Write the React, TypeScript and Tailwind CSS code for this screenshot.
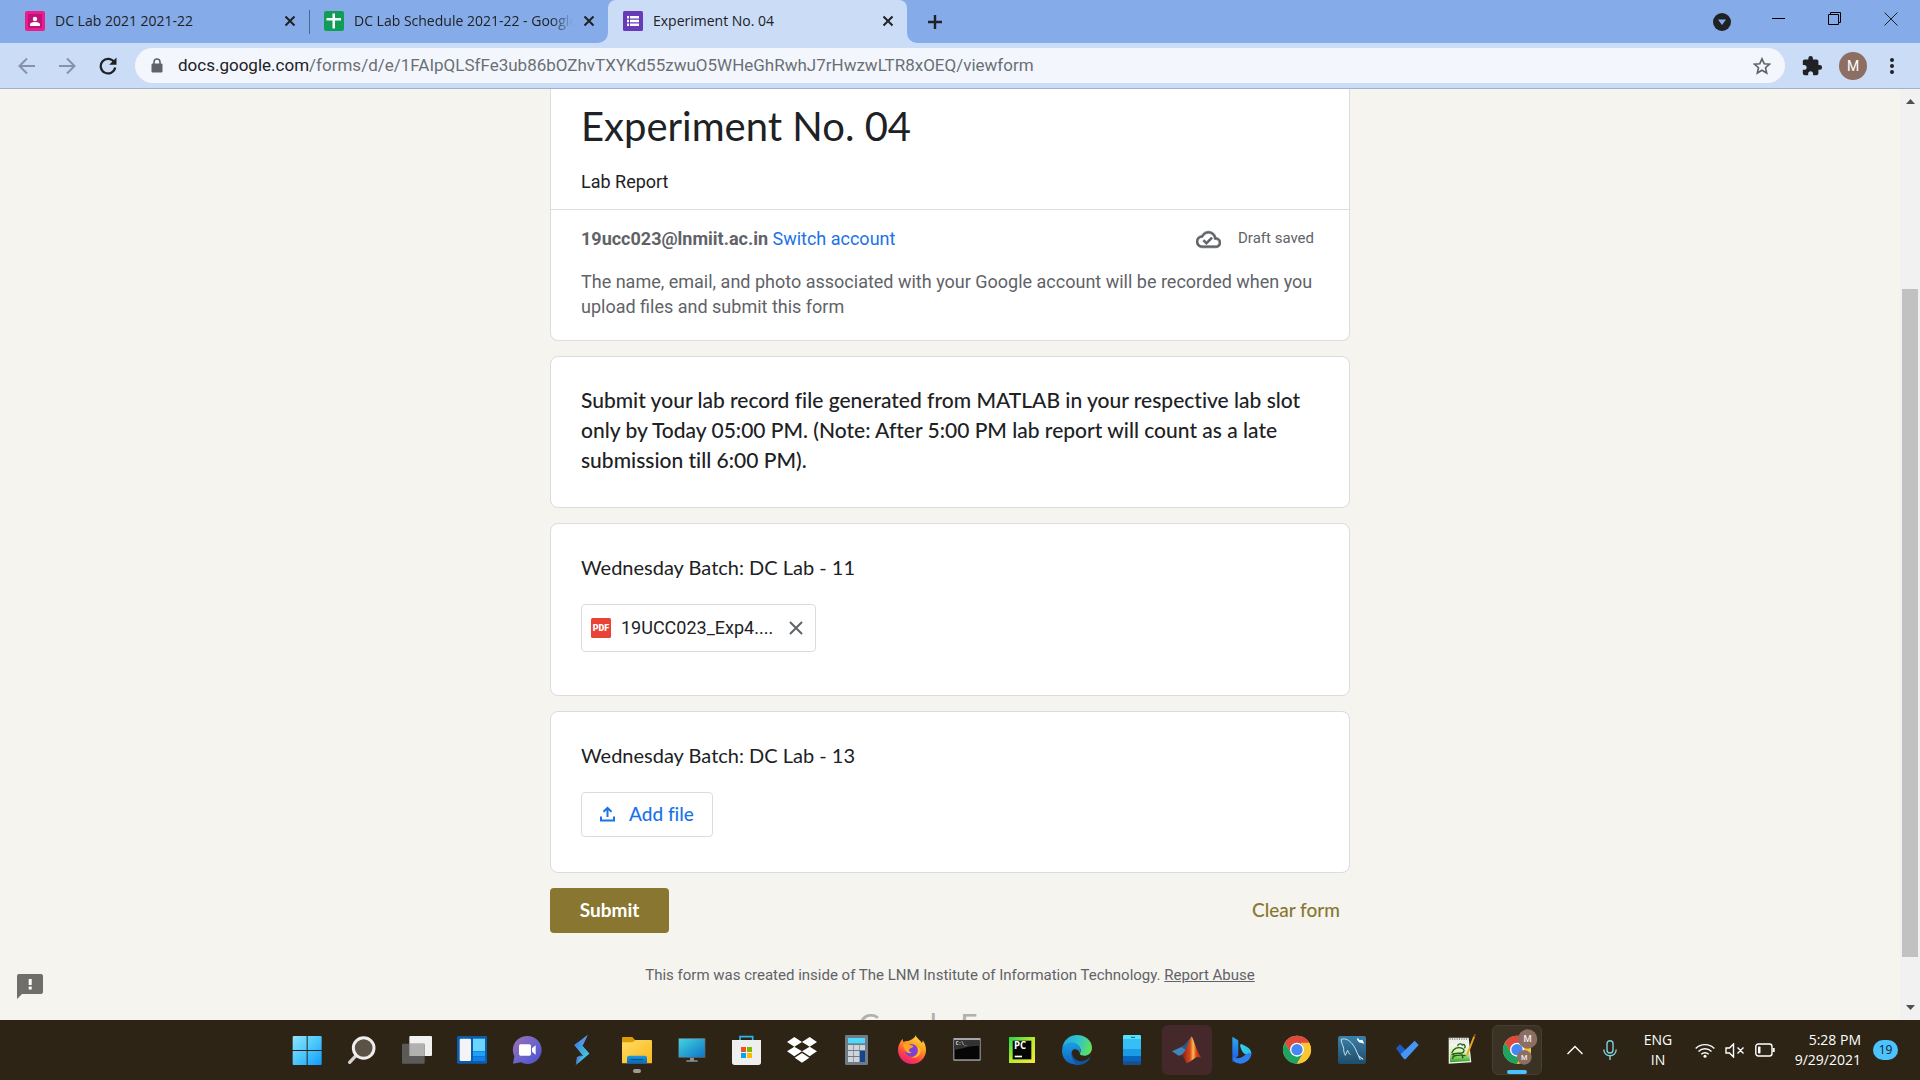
import React from "react";

/* ---------- Browser chrome ---------- */

function CloseGlyph() {
  return (
    <svg viewBox="0 0 12 12" className="size-3" fill="none" stroke="#202124" strokeWidth="2">
      <path d="M1.5 1.5l9 9M10.5 1.5l-9 9" />
    </svg>
  );
}

function ClassroomIcon() {
  return (
    <svg viewBox="0 0 20 20" className="size-5">
      <rect width="20" height="20" rx="2" fill="#e91e8c" />
      <rect x="3" y="3" width="14" height="14" fill="#c2127a" />
      <circle cx="10" cy="8" r="2.2" fill="#fff" />
      <path d="M5 15v-1.5c0-1.8 3-2.5 5-2.5s5 .7 5 2.500V15z" fill="#fff" />
    </svg>
  );
}

function SheetsIcon() {
  return (
    <svg viewBox="0 0 20 20" className="size-5">
      <rect width="20" height="20" rx="2" fill="#0f9d58" />
      <path d="M8.500 2.500h2.500v4.500h6v2.500h-6v8H8.500v-8h-6V7h6z" fill="#fff" />
    </svg>
  );
}

function FormsIcon() {
  return (
    <svg viewBox="0 0 20 20" className="size-5">
      <rect width="20" height="20" rx="1.500" fill="#673ab7" />
      <path
        d="M4 5h2v2.500H4zM7 5h9v2.500H7zM4 8.800h2v2.500H4zM7 8.800h9v2.500H7zM4 12.600h2v2.500H4zM7 12.600h9v2.500H7z"
        fill="#fff"
      />
    </svg>
  );
}

type TabProps = { icon: React.ReactNode; title: string; active?: boolean; divider?: boolean };

function Tab({ icon, title, active, divider }: TabProps) {
  return (
    <div
      className={
        active
          ? "relative flex h-full w-[299px] items-center gap-2.5 rounded-t-lg bg-[#cbdcf7] pr-[13px] pb-0.5 pl-[15px]"
          : "relative flex h-full w-[299px] items-center gap-2.5 pr-[13px] pb-0.5 pl-[15px]"
      }
    >
      {icon}
      <span
        className={
          divider === false
            ? "min-w-0 flex-1 overflow-hidden whitespace-nowrap [mask-image:linear-gradient(to_right,black_90%,transparent)]"
            : "min-w-0 flex-1 overflow-hidden whitespace-nowrap"
        }
      >
        {title}
      </span>
      <button type="button" aria-label={"Close " + title} className="flex size-3 items-center justify-center">
        <CloseGlyph />
      </button>
      {divider && <span className="absolute top-2.5 -right-px h-6 w-px bg-[#4d668f]" />}
      {active && (
        <>
          <svg viewBox="0 0 10 10" className="absolute bottom-0 -left-2.5 size-2.5">
            <path d="M10 0v10H0A10 10 0 0 0 10 0z" fill="#cbdcf7" />
          </svg>
          <svg viewBox="0 0 10 10" className="absolute -right-2.5 bottom-0 size-2.5">
            <path d="M0 0v10h10A10 10 0 0 1 0 0z" fill="#cbdcf7" />
          </svg>
        </>
      )}
    </div>
  );
}

function TabStrip() {
  return (
    <div className="flex h-[43px] shrink-0 items-center bg-[#85ace9] pl-2.5 font-['Open_Sans',sans-serif] text-sm text-[#202124]">
      <Tab icon={<ClassroomIcon />} title="DC Lab 2021 2021-22" divider />
      <Tab icon={<SheetsIcon />} title="DC Lab Schedule 2021-22 - Google Sheets" divider={false} />
      <Tab icon={<FormsIcon />} title="Experiment No. 04" active />
      <button type="button" aria-label="New tab" className="ml-5 flex size-4 items-center justify-center">
        <svg viewBox="0 0 16 16" className="size-4" stroke="#202124" strokeWidth="2.400">
          <path d="M8 1v14M1 8h14" />
        </svg>
      </button>
      <button type="button" aria-label="Search tabs" className="ml-auto flex w-[57px] justify-center">
        <svg viewBox="0 0 18 18" className="size-[18px]">
          <circle cx="9" cy="9" r="9" fill="#202124" />
          <path d="M5 6.500h8L9 12z" fill="#85ace9" />
        </svg>
      </button>
      <div className="flex items-center self-start">
        <button type="button" aria-label="Minimize" className="flex h-[37px] w-14 items-center justify-center">
          <span className="h-px w-[13px] bg-black" />
        </button>
        <button type="button" aria-label="Restore" className="flex h-[37px] w-14 items-center justify-center">
          <svg viewBox="0 0 13 13" className="size-[13px]" fill="none" stroke="#000">
            <path d="M.5 2.500h10v10H.500zM2.500 2.500v-2h10v10h-2" />
          </svg>
        </button>
        <button type="button" aria-label="Close window" className="flex h-[37px] w-[58px] items-center justify-center">
          <svg viewBox="0 0 14 14" className="size-3.5" fill="none" stroke="#222">
            <path d="M.5.5l13 13M13.500.5l-13 13" />
          </svg>
        </button>
      </div>
    </div>
  );
}

function Toolbar() {
  return (
    <div className="flex h-[46px] shrink-0 items-center border-b border-[#a3b0c9] bg-[#cbdcf7] pl-[7px]">
      <button type="button" aria-label="Back" className="flex w-10 justify-center">
        <svg viewBox="0 0 18 18" className="size-[18px]" fill="none" stroke="#8592a9" strokeWidth="2">
          <path d="M17 9H2M9 1.500L1.500 9 9 16.500" />
        </svg>
      </button>
      <button type="button" aria-label="Forward" className="flex w-10 justify-center">
        <svg viewBox="0 0 18 18" className="size-[18px]" fill="none" stroke="#8592a9" strokeWidth="2">
          <path d="M1 9h15M9 1.500L16.500 9 9 16.500" />
        </svg>
      </button>
      <button type="button" aria-label="Reload" className="mr-1.5 flex w-[42px] justify-center">
        <svg viewBox="0 0 18 18" className="size-[18px]">
          <path d="M15.200 5.200A7.300 7.300 0 1 0 16.200 10.500" fill="none" stroke="#202124" strokeWidth="2.200" />
          <path d="M17.500.5v7.300h-7.300z" fill="#202124" />
        </svg>
      </button>
      <div className="flex h-[35px] flex-1 items-center rounded-full bg-[#f3f7fd] pr-3.5 pl-4">
        <svg viewBox="0 0 12 15" className="mr-[15px] h-[15px] w-3">
          <rect x=".5" y="5.500" width="11" height="9" rx="1.200" fill="#5f6368" />
          <path d="M3 6V4a3 3 0 0 1 6 0v2" fill="none" stroke="#5f6368" strokeWidth="1.600" />
        </svg>
        <a href="#form" className="flex-1 font-['Roboto',sans-serif] text-[17px] text-[#6b6f75]">
          <span className="text-[#202124]">docs.google.com</span>
          /forms/d/e/1FAIpQLSfFe3ub86bOZhvTXYKd55zwuO5WHeGhRwhJ7rHwzwLTR8xOEQ/viewform
        </a>
        <button type="button" aria-label="Bookmark this tab">
          <svg viewBox="0 0 18 18" className="size-[18px]" fill="none" stroke="#5f6368" strokeWidth="1.600">
            <path d="M9 1.800l2.200 4.900 5.300.5-4 3.500 1.200 5.300L9 13.200 4.300 16l1.200-5.300-4-3.500 5.300-.5z" />
          </svg>
        </button>
      </div>
      <button type="button" aria-label="Extensions" className="ml-4">
        <svg viewBox="0 0 24 24" className="size-[22px]" fill="#202124">
          <path d="M20.500 11H19V7c0-1.100-.9-2-2-2h-4V3.500a2.500 2.500 0 0 0-5 0V5H4c-1.100 0-2 .9-2 2v3.800h1.500c1.500 0 2.700 1.200 2.700 2.700s-1.200 2.700-2.700 2.700H2V20c0 1.100.9 2 2 2h3.800v-1.500c0-1.500 1.200-2.700 2.700-2.700s2.700 1.200 2.700 2.700V22H17c1.100 0 2-.9 2-2v-4h1.500a2.500 2.500 0 0 0 0-5z" />
        </svg>
      </button>
      <button
        type="button"
        aria-label="Profile"
        className="ml-4 flex size-7 items-center justify-center rounded-full bg-[#8d6e63] font-['Roboto',sans-serif] text-sm text-white"
      >
        M
      </button>
      <button type="button" aria-label="Menu" className="mr-[21px] ml-[18px] flex w-[14px] justify-center">
        <svg viewBox="0 0 4 16" className="h-4 w-1" fill="#202124">
          <circle cx="2" cy="2" r="2" />
          <circle cx="2" cy="8" r="2" />
          <circle cx="2" cy="14" r="2" />
        </svg>
      </button>
    </div>
  );
}

/* ---------- Form ---------- */

function Card({ children, className }: { children: React.ReactNode; className: string }) {
  return <section className={"rounded-lg border border-[#dadce0] bg-white " + className}>{children}</section>;
}

function HeaderCard() {
  return (
    <section className="rounded-b-lg border border-t-0 border-[#dadce0] bg-white">
      <div className="border-b border-[#dadce0] px-[30px] pt-[13px] pb-[15px]">
        <h1 className="font-['Lato',sans-serif] text-[40px] leading-[48px]">Experiment No. 04</h1>
        <p className="mt-5 text-lg leading-6">Lab Report</p>
      </div>
      <div className="px-[30px] pt-[17px] pb-[21px] text-lg leading-6 text-[#5f6368]">
        <div className="flex items-center justify-between">
          <p>
            <b className="font-bold">19ucc023@lnmiit.ac.in</b>{" "}
            <a href="#switch" className="text-[#1a73e8]">
              Switch account
            </a>
          </p>
          <div className="flex h-6 items-center gap-[17px]">
            <svg viewBox="0 0 24 24" className="size-[25px]" fill="#5f6368" stroke="#5f6368" strokeWidth=".6">
              <path d="M19.350 10.040A7.490 7.490 0 0 0 12 4C9.110 4 6.600 5.640 5.350 8.040A5.994 5.994 0 0 0 0 14c0 3.310 2.690 6 6 6h13c2.760 0 5-2.240 5-5 0-2.640-2.050-4.780-4.650-4.960zM19 18H6c-2.210 0-4-1.790-4-4 0-2.050 1.530-3.760 3.560-3.970l1.070-.11.500-.95A5.469 5.469 0 0 1 12 6c2.620 0 4.880 1.860 5.390 4.430l.3 1.500 1.530.11A2.980 2.980 0 0 1 22 15c0 1.650-1.350 3-3 3zm-9-3.820l-2.090-2.090L6.500 13.500 10 17l6.010-6.010-1.410-1.410z" />
            </svg>
            <span className="w-[81px] pb-0.5 text-[15px] leading-5 whitespace-nowrap">Draft saved</span>
          </div>
        </div>
        <p className="mt-[18px] leading-[25px]">
          The name, email, and photo associated with your Google account will be recorded when you upload files and
          submit this form
        </p>
      </div>
    </section>
  );
}

function FileChip() {
  return (
    <div className="mt-[22px] flex h-12 w-[235px] items-center rounded border border-[#dadce0] pr-3 pl-[9px]">
      <svg viewBox="0 0 20 20" className="mr-2.5 size-5">
        <rect width="20" height="20" rx="1.500" fill="#ea4335" />
        <text x="10" y="13" textAnchor="middle" fontFamily="Roboto" fontWeight="900" fontSize="9" fill="#fff">
          PDF
        </text>
      </svg>
      <span className="w-[154px] text-lg leading-6">19UCC023_Exp4....</span>
      <button type="button" aria-label="Remove file" className="ml-auto">
        <svg viewBox="0 0 14 14" className="size-3.5" fill="none" stroke="#5f6368" strokeWidth="2">
          <path d="M1 1l12 12M13 1L1 13" />
        </svg>
      </button>
    </div>
  );
}

function Form() {
  return (
    <form id="form" className="mx-auto flex w-full max-w-[800px] flex-col gap-[15px]">
      <HeaderCard />
      <Card className="px-[30px] pt-7 pb-8">
        <h2 className="font-['Lato',sans-serif] text-[21px] leading-[30px] font-medium [font-variant-ligatures:none]">
          Submit your lab record file generated from MATLAB in your respective lab slot only by Today 05:00 PM. (Note:
          After 5:00 PM lab report will count as a late submission till 6:00 PM).
        </h2>
      </Card>
      <Card className="px-[30px] pt-7 pb-[43px]">
        <h2 className="font-['Lato',sans-serif] text-xl leading-[30px]">Wednesday Batch: DC Lab - 11</h2>
        <FileChip />
      </Card>
      <Card className="px-[30px] pt-7 pb-[35px]">
        <h2 className="font-['Lato',sans-serif] text-xl leading-[30px]">Wednesday Batch: DC Lab - 13</h2>
        <button
          type="button"
          className="mt-[22px] flex h-[45px] w-[132px] items-center gap-3.5 rounded border border-[#dadce0] pb-0.5 pl-[18px] font-['Lato',sans-serif] text-[19px] leading-6 font-medium text-[#1a73e8] [font-variant-ligatures:none]"
        >
          <svg viewBox="0 0 15 16" className="h-4 w-[15px]" fill="none" stroke="#1a73e8" strokeWidth="2">
            <path d="M7.500 11V2M3.500 5.800l4-4 4 4M1 10.500V14.500h13V10.500" />
          </svg>
          Add file
        </button>
      </Card>
      <div className="flex items-center justify-between font-['Lato',sans-serif] text-[19px] leading-6">
        <button type="submit" className="h-[45px] w-[119px] rounded bg-[#897731] pb-0.5 font-bold text-white">
          Submit
        </button>
        <button type="reset" className="mr-2.5 pb-0.5 font-medium text-[#897731]">
          Clear form
        </button>
      </div>
      <footer className="mt-[17px] text-center text-[15px] leading-5 text-[#5f6368]">
        This form was created inside of The LNM Institute of Information Technology.{" "}
        <a href="#abuse" className="underline">
          Report Abuse
        </a>
        <p className="mt-[21px] font-['Lato',sans-serif] text-[30px] leading-9 whitespace-nowrap text-[#b1b0ac]">
          Google Forms
        </p>
      </footer>
    </form>
  );
}

function Scrollbar() {
  return (
    <div className="flex w-5 shrink-0 flex-col items-center bg-[#f1f1f1] py-2.5">
      <svg viewBox="0 0 9 5" className="h-[5px] w-[9px]" fill="#505050">
        <path d="M0 5L4.500 0 9 5z" />
      </svg>
      <span className="flex-[185]" />
      <span className="w-4 flex-[668] bg-[#c1c1c1]" />
      <span className="flex-[48]" />
      <svg viewBox="0 0 9 5" className="h-[5px] w-[9px]" fill="#505050">
        <path d="M0 0l4.500 5L9 0z" />
      </svg>
    </div>
  );
}

/* ---------- Taskbar ---------- */

function Art({ children }: { children: React.ReactNode }) {
  return (
    <svg viewBox="0 0 90 90" className="size-[30px] overflow-visible">
      {children}
    </svg>
  );
}

function Grad({ id, from, to, mid, flat }: { id: string; from: string; to: string; mid?: string; flat?: boolean }) {
  return (
    <linearGradient id={id} x1="0" y1="0" x2={flat ? "0" : "1"} y2="1">
      <stop offset="0" stopColor={from} />
      {mid && <stop offset=".5" stopColor={mid} />}
      <stop offset="1" stopColor={to} />
    </linearGradient>
  );
}

function ChromeArt() {
  return (
    <>
      <circle cx="45" cy="44" r="42" fill="#fbc634" />
      <path d="M45 44L8.600 23A42 42 0 0 1 81.400 23z" fill="#dd4b3e" />
      <path d="M45 23h36.400A42 42 0 0 0 8.600 23L27 54z" fill="#dd4b3e" />
      <path d="M8.600 23A42 42 0 0 0 45 86L63.200 54.500 45 64 27 54z" fill="#1da462" />
      <path d="M81.400 23A42 42 0 0 1 45 86L63.200 54.500A21 21 0 0 0 62 32l-6-9z" fill="#fbc634" />
      <circle cx="45" cy="44" r="21" fill="#fff" />
      <circle cx="45" cy="44" r="17" fill="#4587f3" />
    </>
  );
}

const apps: { name: string; art: React.ReactNode; state?: "running" | "alert" | "active" }[] = [
  {
    name: "Start",
    art: (
      <>
        <defs>
          <linearGradient id="win" gradientUnits="userSpaceOnUse" x1="2" y1="3" x2="89" y2="90">
            <stop offset="0" stopColor="#92e3fd" />
            <stop offset=".5" stopColor="#4bc8fd" />
            <stop offset="1" stopColor="#109bfc" />
          </linearGradient>
        </defs>
        <path
          d="M5 3h39v42H2V6a3 3 0 0 1 3-3zM47 3h39a3 3 0 0 1 3 3v39H47zM2 48h42v42H5a3 3 0 0 1-3-3zM47 48h42v39a3 3 0 0 1-3 3H47z"
          fill="url(#win)"
        />
      </>
    ),
  },
  {
    name: "Search",
    art: (
      <>
        <path d="M27 62L8 82" stroke="#d5d5d5" strokeWidth="10" strokeLinecap="round" />
        <circle cx="50" cy="39" r="31" fill="#5b5345" stroke="#eeeeee" strokeWidth="9" />
      </>
    ),
  },
  {
    name: "Task View",
    art: (
      <>
        <rect x="22" y="3" width="68" height="60" rx="3" fill="#f1f1f1" />
        <rect x="0" y="26" width="68" height="60" rx="3" fill="#5c5a58" />
        <path d="M22 26h46v37H22z" fill="#b2b1af" />
      </>
    ),
  },
  {
    name: "Widgets",
    art: (
      <>
        <rect x="0" y="3" width="90" height="83" rx="4" fill="#0d5bab" />
        <rect x="8" y="11" width="34" height="67" rx="4" fill="#f4f4f6" />
        <path d="M48 11h36v37H48z" fill="#6ad5ff" />
        <path d="M48 49h36v15H48z" fill="#1ea2f9" />
        <path d="M48 65h36v13H48z" fill="#0b83ea" />
      </>
    ),
  },
  {
    name: "Chat",
    art: (
      <>
        <defs>
          <Grad id="chat" from="#a06fb4" mid="#6f65c8" to="#4a4fd0" />
        </defs>
        <path d="M45 3a42 42 0 1 1-18 79L3 86l4-22A42 42 0 0 1 45 3z" fill="url(#chat)" />
        <rect x="21" y="28" width="36" height="34" rx="5" fill="#fff" />
        <path d="M60 40l11-9v28l-11-9z" fill="#fff" />
      </>
    ),
  },
  {
    name: "Stream",
    art: (
      <>
        <defs>
          <Grad id="strm" from="#3f7de8" to="#42e0dc" />
        </defs>
        <path d="M62 0L22 30l24 30 21-4-21-24z" fill="url(#strm)" />
        <path d="M62 0L48 30 38 20z" fill="#5b8fe6" />
        <path d="M46 32l21 24-40 34 12-24 10-6-27-30 14-10z" fill="url(#strm)" />
        <path d="M26 90l4-24 14-6z" fill="#5a86e8" />
      </>
    ),
  },
  {
    name: "File Explorer",
    state: "running",
    art: (
      <>
        <defs>
          <Grad id="fold" from="#ffdc64" to="#f9b81c" />
          <Grad id="fold2" from="#1b9be0" to="#0d65b5" flat />
        </defs>
        <path d="M0 30V9a3 3 0 0 1 3-3h28l8 9v15z" fill="#dd9b05" />
        <path d="M0 22h32l8-7h47a3 3 0 0 1 3 3v67H0z" fill="url(#fold)" />
        <path d="M15 86V69a7 7 0 0 1 7-7h46a7 7 0 0 1 7 7v17z" fill="url(#fold2)" />
        <path d="M26 74h38" stroke="#0a4a8a" strokeWidth="3" />
      </>
    ),
  },
  {
    name: "Remote Desktop",
    art: (
      <>
        <defs>
          <Grad id="mon" from="#3fd4df" to="#1173c6" />
        </defs>
        <rect x="4" y="9" width="81" height="59" rx="2" fill="#5d6c78" />
        <rect x="6" y="12" width="77" height="54" fill="url(#mon)" />
        <path d="M39 68h12v8h11v4H28v-4h11z" fill="#84919b" />
      </>
    ),
  },
  {
    name: "Microsoft Store",
    art: (
      <>
        <path d="M24 18V5h38v13" fill="none" stroke="#2ab4f0" strokeWidth="5" />
        <path d="M0 15h87v67a8 8 0 0 1-8 8H8a8 8 0 0 1-8-8z" fill="#efefef" />
        <path d="M27 36h15v15H27z" fill="#f25022" />
        <path d="M45 36h15v15H45z" fill="#7fba00" />
        <path d="M27 54h15v15H27z" fill="#00a4ef" />
        <path d="M45 54h15v15H45z" fill="#ffb900" />
      </>
    ),
  },
  {
    name: "Dropbox",
    art: (
      <path
        d="M22 6l23 15-23 14L0 21zM68 6l22 15-22 14-23-14zM22 35l23 14-23 15L0 49zM68 35l22 14-22 15-23-15zM45 54l22 14-22 15-22-15z"
        fill="#fff"
      />
    ),
  },
  {
    name: "Calculator",
    art: (
      <>
        <rect x="9" y="0" width="69" height="90" rx="4" fill="#6f7c87" />
        <rect x="18" y="9" width="51" height="16" fill="#4fd9fb" />
        <path
          d="M18 30h16v15H18zM36 30h16v15H36zM54 30h15v15H54zM18 48h16v15H18zM36 48h16v15H36zM18 66h16v15H18zM36 66h16v15H36z"
          fill="#cfd4da"
        />
        <path d="M54 48h15v33H54z" fill="#12478d" />
      </>
    ),
  },
  {
    name: "Firefox",
    art: (
      <>
        <defs>
          <linearGradient id="ff" x1=".8" y1="0" x2=".3" y2="1">
            <stop offset="0" stopColor="#ffe44a" />
            <stop offset=".4" stopColor="#ff9a1f" />
            <stop offset=".75" stopColor="#ff3f4a" />
            <stop offset="1" stopColor="#e81c80" />
          </linearGradient>
        </defs>
        <path
          d="M56 0c2 10 14 14 18 24 3-1 3-6 3-8 7 9 10 19 10 29a42 42 0 0 1-84 0c0-14 6-24 14-34 0 5 1 8 3 10 4-3 9-4 14-3 8-4 20-8 22-18z"
          fill="url(#ff)"
        />
        <circle cx="43" cy="46" r="19" fill="#7a42d8" />
        <path d="M18 30c8-6 16-4 22 0 6 1 10 3 8 6-4 4-10 3-12 8 0 4 3 7 8 7-4 6-14 4-18-2-4-5-5-12-8-19z" fill="#ffa321" />
        <path d="M62 36c6 14-2 30-19 31 18 4 31-10 27-26z" fill="#ffc32d" />
      </>
    ),
  },
  {
    name: "Command Prompt",
    art: (
      <>
        <rect x="4" y="9" width="82" height="68" rx="2" fill="#a4a6aa" />
        <rect x="7" y="16" width="76" height="57" fill="#060606" />
        <path d="M7 16h76v16C50 32 30 42 7 44z" fill="#333" />
        <text x="11" y="31" fontFamily="Liberation Mono" fontWeight="700" fontSize="14" fill="#e0e0e0">
          C:\_
        </text>
      </>
    ),
  },
  {
    name: "PyCharm",
    art: (
      <>
        <defs>
          <Grad id="pyc" from="#1fd84c" mid="#b8ea2c" to="#f7e93a" />
        </defs>
        <rect x="6" y="6" width="78" height="78" fill="url(#pyc)" />
        <rect x="17" y="17" width="56" height="56" fill="#050505" />
        <text x="21" y="43" fontFamily="Open Sans" fontWeight="700" fontSize="29" fill="#fff">
          PC
        </text>
        <path d="M23 62h22v5H23z" fill="#fff" />
      </>
    ),
  },
  {
    name: "Microsoft Edge",
    art: (
      <>
        <defs>
          <linearGradient id="eg1" x1="0" y1=".3" x2="1" y2=".5">
            <stop offset="0" stopColor="#2aa7e0" />
            <stop offset=".5" stopColor="#2fc3cf" />
            <stop offset="1" stopColor="#62e05a" />
          </linearGradient>
          <Grad id="eg2" from="#1a9de4" to="#0f63bd" flat />
        </defs>
        <path d="M1 40C4 16 22 0 45 0c26 0 45 18 45 38 0 16-12 24-24 24-9 0-14-4-12-8 4-6 3-18-10-24C30 24 8 26 1 40z" fill="url(#eg1)" />
        <path d="M0 48C0 32 14 22 28 22c16 0 27 10 27 22 0 4-2 8-3 10 0-6-6-11-13-11-8 0-11 8-10 15 2 18 14 30 28 31-8 2-16 1-22-1C16 86 0 70 0 48z" fill="url(#eg2)" />
        <path d="M30 52c0 20 18 30 34 26 8-2 14-6 18-11 2-1 3 0 2 2-6 12-20 21-35 21-12-6-24-20-19-38z" fill="#1255a4" />
      </>
    ),
  },
  {
    name: "Phone Link",
    art: (
      <>
        <rect x="18" y="0" width="54" height="90" rx="4" fill="#1b4f8b" />
        <path d="M18 12h54v30H18z" fill="#35bff5" />
        <path d="M22 0h46a4 4 0 0 1 4 4v8H18V4a4 4 0 0 1 4-4z" fill="#55e2fb" />
        <path d="M18 42h54v21H18z" fill="#1b9be5" />
        <path d="M18 63h54v16H18z" fill="#0767be" />
        <path d="M42 7h12" stroke="#0f5a8a" strokeWidth="3" />
      </>
    ),
  },
  {
    name: "MATLAB",
    state: "alert",
    art: (
      <>
        <defs>
          <linearGradient id="mat" x1="0" y1="0" x2="1" y2="0">
            <stop offset="0" stopColor="#7a1812" />
            <stop offset=".45" stopColor="#d9481d" />
            <stop offset=".6" stopColor="#f9c04c" />
            <stop offset=".75" stopColor="#d8431a" />
            <stop offset="1" stopColor="#a92b14" />
          </linearGradient>
        </defs>
        <path d="M0 49l28-13c10-2 20-20 31-30L36 58 20 62z" fill="#3f86bd" />
        <path d="M28 36c12-4 18-20 31-31L40 44z" fill="#245a86" />
        <path d="M59 4c8 14 16 48 29 64-9-4-16-3-23 4-8 6-14 10-22 13-3-8-6-20-16-24 16-8 22-46 32-57z" fill="url(#mat)" />
      </>
    ),
  },
  {
    name: "Bing",
    art: (
      <>
        <defs>
          <Grad id="bing" from="#2fa6ee" to="#1b57e8" flat />
          <Grad id="bing2" from="#29d6e4" to="#35b8ee" />
        </defs>
        <path d="M16 5l15 9c2 1 3 3 3 5v42L18 82c-2-2-2-4-2-6z" fill="url(#bing)" />
        <path d="M42 27c16 6 32 14 31 30-2 10-8 6-14 2-10-4-14-8-19-24-1-4 0-7 2-8z" fill="url(#bing2)" />
        <path d="M73 56c0 20-26 34-40 29-12-3-15-8-14-20 10 10 28 2 36-6 8-6 16-6 18-3z" fill="#2d7ff0" />
      </>
    ),
  },
  { name: "Google Chrome", art: <ChromeArt /> },
  {
    name: "MySQL Workbench",
    art: (
      <>
        <defs>
          <Grad id="sql" from="#3a81a9" to="#1f4c69" flat />
        </defs>
        <rect x="3" y="3" width="84" height="84" rx="6" fill="url(#sql)" />
        <path
          d="M12 13c14-4 24 2 34 14 10 11 12 24 18 34 4 6 9 9 15 12M12 13c2 14 6 18 8 27 0 8 1 14 5 21l7-15c2 6 5 10 8 13M64 61l6 14M64 61l14 12"
          fill="none"
          stroke="#cfe3ee"
          strokeWidth="3"
        />
        <path d="M62 8l6 8 8-2 6 12-16-4-6-8z" fill="#fff" />
      </>
    ),
  },
  {
    name: "To Do",
    art: (
      <>
        <path d="M12 40l12-12 23 22-12 22z" fill="#1b5cc0" />
        <path d="M26 58L68 17l12 13-38 41c-2 2-4 2-6 0z" fill="#4697f5" />
      </>
    ),
  },
  {
    name: "Notepad++",
    art: (
      <>
        <defs>
          <Grad id="npp" from="#f6faf2" mid="#d0f0a8" to="#2aa41c" flat />
        </defs>
        <path d="M5 8h60l8 74-68 4z" fill="#eef0ec" />
        <path d="M9 26h54l6 52-60 4z" fill="url(#npp)" />
        <path d="M8 12h56" stroke="#777" strokeWidth="5" strokeDasharray="3 4" />
        <path
          d="M14 54c6-14 18-20 32-14 8 4 6 12-2 14-10 2-22-2-30 6M32 34c0-8 12-10 14-4 6-4 12 4 6 10M16 66c12-8 28-6 40-4M22 60l-6 12M44 58l4 12"
          fill="none"
          stroke="#245c18"
          strokeWidth="4"
        />
        <path d="M84 6L64 58l-6 6 1-9L79 4z" fill="#e8a820" />
        <path d="M84 6l3-7-5-2-3 7z" fill="#b04428" />
      </>
    ),
  },
  {
    name: "Chrome - profile M",
    state: "active",
    art: (
      <>
        <ChromeArt />
        <circle cx="77" cy="12" r="29" fill="#8d6e63" />
        <circle cx="67" cy="67" r="22" fill="#8d6e63" />
        <text x="77" y="22" textAnchor="middle" fontFamily="Roboto" fontWeight="500" fontSize="28" fill="#f1e9e6">
          M
        </text>
        <text x="67" y="75" textAnchor="middle" fontFamily="Roboto" fontWeight="500" fontSize="22" fill="#f1e9e6">
          M
        </text>
      </>
    ),
  },
];

function Taskbar() {
  return (
    <footer className="flex h-[60px] shrink-0 items-center bg-[#2d2415] font-['Open_Sans',sans-serif] text-sm text-white">
      <nav className="flex flex-1 items-center justify-end gap-[5px]">
        {apps.map(({ name, art, state }) => (
          <button
            key={name}
            type="button"
            aria-label={name}
            className={
              state === "alert"
                ? "relative flex size-[50px] items-center justify-center rounded-md bg-[#45282a]"
                : state === "active"
                  ? "relative flex size-[50px] items-center justify-center rounded-md border border-[#463e30] bg-[#3a3224]"
                  : "relative flex size-[50px] items-center justify-center"
            }
          >
            <Art>{art}</Art>
            {state === "running" && <span className="absolute bottom-0.5 h-1 w-2 rounded-full bg-[#a09b92]" />}
            {state === "active" && <span className="absolute bottom-0 h-1 w-5 rounded-full bg-[#4cc2ff]" />}
          </button>
        ))}
      </nav>
      <div className="flex w-[378px] items-center pl-4">
        <button type="button" aria-label="Show hidden icons" className="flex w-[34px] justify-center">
          <svg viewBox="0 0 16 10" className="h-2.5 w-4" fill="none" stroke="#fff" strokeWidth="1.400">
            <path d="M.5 9L8 1.500 15.500 9" />
          </svg>
        </button>
        <button type="button" aria-label="Microphone" className="flex w-9 justify-center">
          <svg viewBox="0 0 14 20" className="h-5 w-3.5" fill="none" stroke="#7fd0dd" strokeWidth="1.400">
            <rect x="4" y=".7" width="6" height="12.300" rx="3" />
            <path d="M.8 9.500a6.200 6.200 0 0 0 12.400 0M7 16v4" />
          </svg>
        </button>
        <button type="button" aria-label="Input language" className="w-[60px] text-center leading-5">
          ENG
          <br />
          IN
        </button>
        <button type="button" aria-label="Network, volume and battery" className="ml-[7px] flex items-center gap-2.5">
          <svg viewBox="0 0 20 15" className="h-[15px] w-5" fill="none" stroke="#fff" strokeWidth="1.400">
            <path d="M.7 5.500a13 13 0 0 1 18.600 0M3.500 8.500a9.200 9.200 0 0 1 13 0M6.300 11.300a5.200 5.200 0 0 1 7.400 0" />
            <circle cx="10" cy="13.300" r="1.500" fill="#fff" stroke="none" />
          </svg>
          <svg viewBox="0 0 20 15" className="h-[15px] w-5" fill="none" stroke="#fff" strokeWidth="1.400">
            <path d="M1 5h3.500L8.500 1v13L4.500 10H1zM12.500 4.500l6 6M18.500 4.500l-6 6" />
          </svg>
          <svg viewBox="0 0 20 14" className="h-3.5 w-5" fill="none" stroke="#fff" strokeWidth="1.400">
            <rect x=".8" y="1" width="16.200" height="12" rx="2.500" />
            <rect x="3" y="3.500" width="2.500" height="7" rx=".8" fill="#fff" stroke="none" />
            <path d="M18.700 5v4" strokeWidth="2" />
          </svg>
        </button>
        <button type="button" aria-label="Date and time" className="ml-auto text-right leading-5">
          5:28 PM
          <br />
          9/29/2021
        </button>
        <span className="mr-[22px] ml-3 flex h-5 w-[25px] items-center justify-center rounded-full bg-[#4cc2ff] text-xs text-[#10202c]">
          19
        </span>
      </div>
    </footer>
  );
}

export default function App() {
  return (
    <div className="flex h-screen flex-col overflow-hidden bg-[#f5f4ef] font-['Roboto',sans-serif] text-[#202124]">
      <TabStrip />
      <Toolbar />
      <div className="flex min-h-0 flex-1">
        <main className="relative min-w-0 flex-1 overflow-hidden">
          <Form />
          <button type="button" aria-label="Report a problem to Google" className="absolute bottom-[21px] left-[17px]">
            <svg viewBox="0 0 26 25" className="h-[25px] w-[26px]">
              <path d="M0 2a2 2 0 0 1 2-2h22a2 2 0 0 1 2 2v16a2 2 0 0 1-2 2H5l-5 5z" fill="#6f6e6b" />
              <path d="M11.700 5h3v6h-3zM11.700 12.500h3v3h-3z" fill="#fff" />
            </svg>
          </button>
        </main>
        <Scrollbar />
      </div>
      <Taskbar />
    </div>
  );
}
